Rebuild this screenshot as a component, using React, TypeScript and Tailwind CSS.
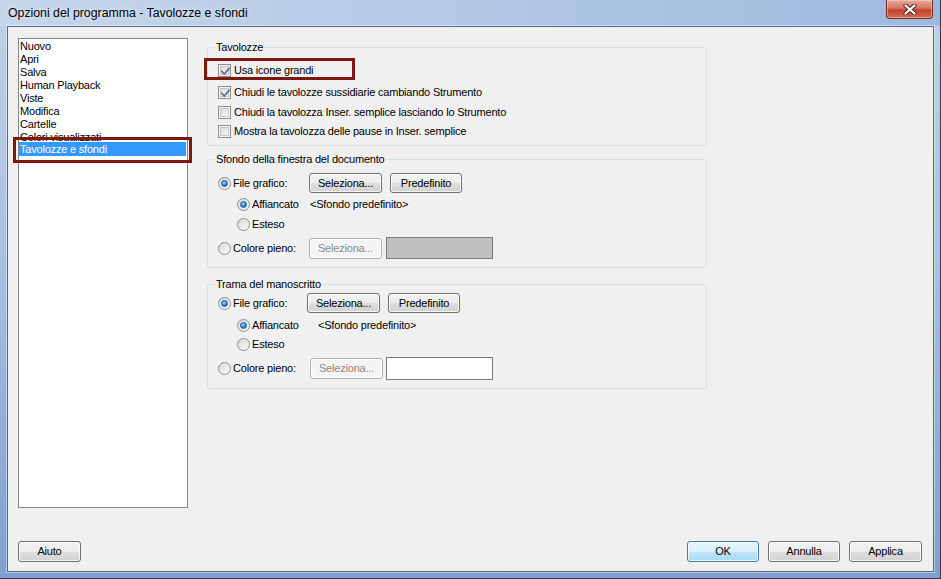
import React from 'react';

const LIST_ITEMS = ['Nuovo', 'Apri', 'Salva', 'Human Playback', 'Viste', 'Modifica', 'Cartelle', 'Colori visualizzati'];

function Check({ checked }: { checked?: boolean }) {
  return (
    <span className="relative w-[13px] h-[13px] shrink-0 border border-[#8e8f8f] bg-[#f4f4f4] p-[1px] block">
      <span className="block w-full h-full border border-[#c5c5c5] bg-[linear-gradient(135deg,#dcdcdc,#f7f7f7)]" />
      {checked && (
        <svg className="absolute left-[1px] top-[1px]" width="11" height="11" viewBox="0 0 11 11">
          <path d="M2 5.5 L4.3 8 L9 2.5" fill="none" stroke="#5b6f94" strokeWidth="1.8" strokeLinecap="square" />
        </svg>
      )}
    </span>
  );
}

function Radio({ checked }: { checked?: boolean }) {
  return (
    <span className="w-[13px] h-[13px] shrink-0 rounded-full border border-[#8e8f8f] bg-[linear-gradient(135deg,#d8d8d8,#fbfbfb)] flex items-center justify-center">
      {checked && (
        <span className="w-[7px] h-[7px] rounded-full border border-[#1f5a95] bg-[radial-gradient(circle_at_40%_35%,#a6dbff,#2a7ccb_60%,#165ea8)]" />
      )}
    </span>
  );
}

function Btn({
  children,
  w,
  variant = 'normal',
}: {
  children: React.ReactNode;
  w: string;
  variant?: 'normal' | 'disabled' | 'default';
}) {
  const styles = {
    normal:
      'border-[#707070] text-black bg-[linear-gradient(to_bottom,#f3f3f3_0%,#ececec_50%,#dedede_51%,#d2d2d2_100%)]',
    disabled: 'border-[#adb2b5] text-[#8a8a8a] bg-[#f4f4f4]',
    default:
      'border-[#3c7fb1] text-black bg-[linear-gradient(to_bottom,#eaf6fd_0%,#d9f0fc_50%,#bee6fd_51%,#a7d9f5_100%)]',
  }[variant];
  return (
    <div
      className={`${w} h-full shrink-0 rounded-[3px] border shadow-[inset_0_0_0_1px_rgba(255,255,255,0.8)] flex items-center justify-center text-[11px] ${styles}`}
    >
      {children}
    </div>
  );
}

function Legend({ children }: { children: React.ReactNode }) {
  return <legend className="px-[1px] -ml-[1px] leading-[13px] text-[11px] text-black">{children}</legend>;
}

export default function App() {
  return (
    <div className="w-[941px] h-[579px] flex flex-col pl-[7px] pr-[6px] pb-[6px] border-r border-b border-[#2e3d52] bg-[linear-gradient(to_bottom,#c0d1e7,#a8c0e1_45%,#7f9fd0)] font-['Liberation_Sans',Arial,sans-serif] text-black overflow-hidden">
      {/* Title bar */}
      <div className="h-[26px] -ml-[7px] -mr-[6px] pl-[8px] pr-[7px] flex justify-between items-start shrink-0 bg-[linear-gradient(to_right,#c5d5ea,#b3c8e5_50%,#9fb9de)]">
        <span className="text-[12.3px] leading-[26px] text-black [text-shadow:0_0_6px_rgba(255,255,255,0.9)]">
          Opzioni del programma - Tavolozze e sfondi
        </span>
        <div className="w-[47px] h-[19px] rounded-b-[4px] border border-t-0 border-[#6b2a22] bg-[linear-gradient(to_bottom,#e9a99b_0%,#d77563_45%,#c4402a_55%,#d86a4f_100%)] shadow-[inset_0_0_0_1px_rgba(255,220,210,0.5)] flex items-center justify-center">
          <svg width="14" height="11" viewBox="0 0 14 11">
            <path d="M2.5 1.5 L11.5 9.5 M11.5 1.5 L2.5 9.5" stroke="#4a2420" strokeWidth="4.2" strokeLinecap="round" />
            <path d="M2.5 1.5 L11.5 9.5 M11.5 1.5 L2.5 9.5" stroke="#ffffff" strokeWidth="2.3" strokeLinecap="round" />
          </svg>
        </div>
      </div>

      {/* Client area */}
      <div className="relative flex-1 flex flex-col border border-[#52678a] bg-[#f0f0f0] shadow-[0_0_0_1px_rgba(255,255,255,0.45)] text-[11px] tracking-[-0.2px]">
        <div className="flex pt-[11px] pl-[10px]">
          {/* Category list */}
          <div className="w-[170px] h-[470px] shrink-0 border border-[#828790] bg-white pt-[1px] flex flex-col">
            {LIST_ITEMS.map((it) => (
              <div key={it} className="h-[13px] leading-[13px] pl-[1px] whitespace-nowrap">
                {it}
              </div>
            ))}
            <div className="relative -mt-[2px] mr-[1px] h-[14px] leading-[14px] pl-[1px] bg-[#3399ff] text-white">
              Tavolozze e sfondi
            </div>
          </div>

          {/* Right column */}
          <div className="w-[500px] ml-[19px] mt-[3px] flex flex-col">
            <fieldset className="border border-[#d5dfe5] rounded-[3px] px-[8px] pb-[7px]">
              <Legend>Tavolozze</Legend>
              <div className="flex items-center h-[13px] mt-[10px] pl-[2px] gap-[3px]">
                <Check checked />
                <span>Usa icone grandi</span>
              </div>
              <div className="flex items-center h-[13px] mt-[9px] pl-[2px] gap-[3px]">
                <Check checked />
                <span>Chiudi le tavolozze sussidiarie cambiando Strumento</span>
              </div>
              <div className="flex items-center h-[13px] mt-[7px] pl-[2px] gap-[3px]">
                <Check />
                <span>Chiudi la tavolozza Inser. semplice lasciando lo Strumento</span>
              </div>
              <div className="flex items-center h-[13px] mt-[6px] pl-[2px] gap-[3px]">
                <Check />
                <span>Mostra la tavolozza delle pause in Inser. semplice</span>
              </div>
            </fieldset>

            <fieldset className="mt-[7px] border border-[#d5dfe5] rounded-[3px] px-[8px] pb-[8px]">
              <Legend>Sfondo della finestra del documento</Legend>
              <div className="flex items-center h-[20px] mt-[7px]">
                <div className="w-[93px] flex items-center gap-[2px] pl-[2px]">
                  <Radio checked />
                  <span>File grafico:</span>
                </div>
                <Btn w="w-[73px]">Seleziona...</Btn>
                <div className="w-[8px]" />
                <Btn w="w-[72px]">Predefinito</Btn>
              </div>
              <div className="flex items-center h-[13px] mt-[5px]">
                <div className="w-[94px] flex items-center gap-[2px] pl-[21px]">
                  <Radio checked />
                  <span>Affiancato</span>
                </div>
                <span>&lt;Sfondo predefinito&gt;</span>
              </div>
              <div className="flex items-center h-[13px] mt-[7px]">
                <div className="flex items-center gap-[2px] pl-[21px]">
                  <Radio />
                  <span>Esteso</span>
                </div>
              </div>
              <div className="flex items-center h-[22px] mt-[6px]">
                <div className="w-[93px] flex items-center gap-[2px] pl-[2px]">
                  <Radio />
                  <span>Colore pieno:</span>
                </div>
                <div className="h-[21px]">
                  <Btn w="w-[73px]" variant="disabled">
                    Seleziona...
                  </Btn>
                </div>
                <div className="w-[107px] h-[22px] ml-[4px] border border-[#7a7a7a] bg-[#c0c0c0]" />
              </div>
            </fieldset>

            <fieldset className="mt-[10px] border border-[#d5dfe5] rounded-[3px] px-[8px] pb-[8px]">
              <Legend>Trama del manoscritto</Legend>
              <div className="flex items-center h-[20px] mt-[2px]">
                <div className="w-[91px] flex items-center gap-[2px] pl-[2px]">
                  <Radio checked />
                  <span>File grafico:</span>
                </div>
                <Btn w="w-[73px]">Seleziona...</Btn>
                <div className="w-[8px]" />
                <Btn w="w-[72px]">Predefinito</Btn>
              </div>
              <div className="flex items-center h-[13px] mt-[6px]">
                <div className="w-[102px] flex items-center gap-[2px] pl-[21px]">
                  <Radio checked />
                  <span>Affiancato</span>
                </div>
                <span>&lt;Sfondo predefinito&gt;</span>
              </div>
              <div className="flex items-center h-[13px] mt-[6px]">
                <div className="flex items-center gap-[2px] pl-[21px]">
                  <Radio />
                  <span>Esteso</span>
                </div>
              </div>
              <div className="flex items-center h-[23px] mt-[6px]">
                <div className="w-[94px] flex items-center gap-[2px] pl-[2px]">
                  <Radio />
                  <span>Colore pieno:</span>
                </div>
                <div className="h-[21px]">
                  <Btn w="w-[73px]" variant="disabled">
                    Seleziona...
                  </Btn>
                </div>
                <div className="w-[107px] h-[23px] ml-[3px] border border-[#7a7a7a] bg-white" />
              </div>
            </fieldset>
          </div>
        </div>

        {/* Bottom buttons */}
        <div className="mt-auto mb-[9px] pl-[10px] pr-[11px] h-[21px] flex items-center">
          <Btn w="w-[63px]">Aiuto</Btn>
          <div className="flex-1" />
          <Btn w="w-[72px]" variant="default">
            OK
          </Btn>
          <div className="w-[9px]" />
          <Btn w="w-[72px]">Annulla</Btn>
          <div className="w-[9px]" />
          <Btn w="w-[73px]">Applica</Btn>
        </div>

        {/* Annotation highlights */}
        <div className="absolute left-[196px] top-[31px] w-[151px] h-[22px] border-[3px] border-[#7d1811] pointer-events-none" />
        <div className="absolute left-[5px] top-[110px] w-[179px] h-[26px] border-[3px] border-[#7d1811] pointer-events-none" />
      </div>
    </div>
  );
}
